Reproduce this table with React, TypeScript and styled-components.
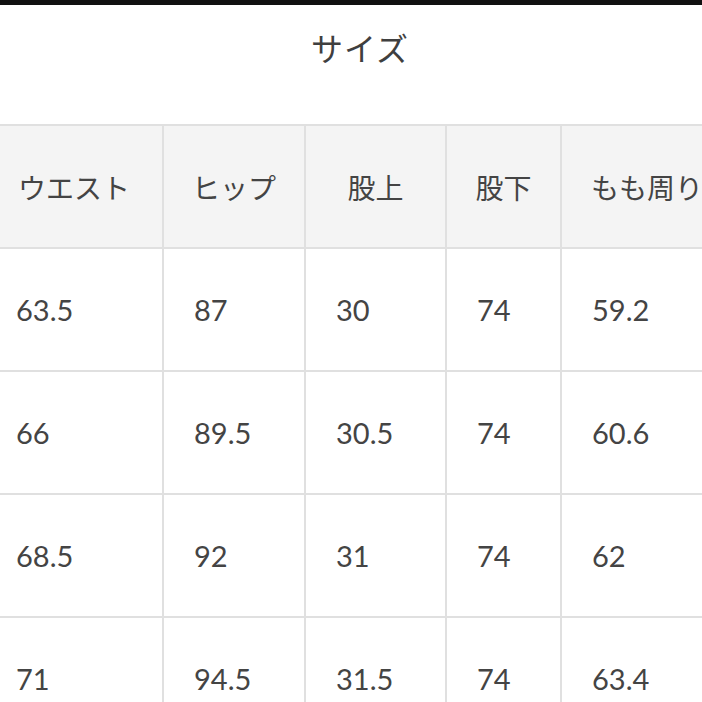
import React from 'react';
import styled, { createGlobalStyle } from 'styled-components';

const GlobalStyle = createGlobalStyle`
  html, body {
    margin: 0;
    padding: 0;
    background: #ffffff;
    overflow: hidden;
  }
  body {
    font-family: Lato, "Noto Sans CJK JP", sans-serif;
    color: #424242;
  }
`;

const Page = styled.div`
  width: 702px;
  height: 702px;
  overflow: hidden;
  display: flex;
  flex-direction: column;
`;

const TopBar = styled.div`
  flex-shrink: 0;
  height: 5px;
  background: #111111;
`;

const Title = styled.h2`
  flex-shrink: 0;
  margin: 0 0 35px;
  padding-left: 18px;
  height: 84px;
  display: flex;
  align-items: center;
  justify-content: center;
  font-family: "Noto Sans CJK JP", sans-serif;
  font-weight: 400;
  font-size: 32px;
  letter-spacing: 1px;
  color: #3f3f3f;
`;

const Table = styled.table`
  flex-shrink: 0;
  border-collapse: collapse;
  table-layout: fixed;
  margin-left: -16px;
  width: 746px;
`;

const HeadCell = styled.th<{ $w: number }>`
  width: ${(p) => p.$w}px;
  height: 121px;
  padding: 0;
  background: #f4f4f4;
  border: 2px solid #e0e0e0;
  font-family: "Noto Sans CJK JP", sans-serif;
  font-weight: 400;
  font-size: 28px;
  color: #444444;
  text-align: center;
  white-space: nowrap;
  overflow: hidden;
`;

const Cell = styled.td`
  height: 121px;
  padding: 0 0 0 30px;
  border: 2px solid #e0e0e0;
  font-family: Lato, sans-serif;
  font-size: 29px;
  color: #444444;
  text-align: left;
  white-space: nowrap;
`;

const columns = [
  { label: 'ウエスト', w: 176 },
  { label: 'ヒップ', w: 140 },
  { label: '股上', w: 139 },
  { label: '股下', w: 113 },
  { label: 'もも周り', w: 170 },
];

const rows = [
  ['63.5', '87', '30', '74', '59.2'],
  ['66', '89.5', '30.5', '74', '60.6'],
  ['68.5', '92', '31', '74', '62'],
  ['71', '94.5', '31.5', '74', '63.4'],
];

const App: React.FunctionComponent = () => {
  return (
    <>
      <GlobalStyle />
      <Page>
        <TopBar />
        <Title>サイズ</Title>
        <Table>
          <thead>
            <tr>
              {columns.map((c) => (
                <HeadCell key={c.label} $w={c.w}>
                  {c.label}
                </HeadCell>
              ))}
            </tr>
          </thead>
          <tbody>
            {rows.map((r, i) => (
              <tr key={i}>
                {r.map((v, j) => (
                  <Cell key={j}>{v}</Cell>
                ))}
              </tr>
            ))}
          </tbody>
        </Table>
      </Page>
    </>
  );
};

export default App;
